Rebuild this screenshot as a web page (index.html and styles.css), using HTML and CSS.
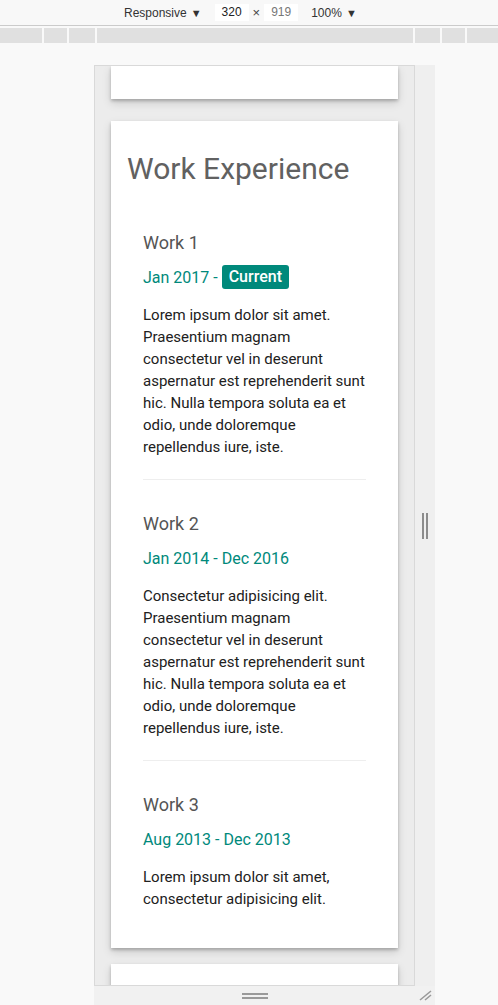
FILE: index.html
```html
<!DOCTYPE html>
<html>
<head>
<meta charset="utf-8">
<link rel="stylesheet" href="styles.css">
</head>
<body>
<div class="toolbar">
  <span class="tb-label">Responsive</span><span class="caret">▼</span>
  <span class="dim-box">320</span><span class="times">×</span><span class="dim-box dim-grey">919</span>
  <span class="tb-label zoom">100%</span><span class="caret">▼</span>
</div>
<div class="ruler">
  <div></div><div></div><div></div><div></div><div></div><div></div><div></div>
</div>
<div class="stage">
  <div class="frame">
    <div class="device">
      <div class="card card-top"></div>
      <div class="card card-main">
        <h2 class="card-title">Work Experience</h2>
        <div class="job">
          <h3 class="job-title">Work 1</h3>
          <div class="job-date">Jan 2017 -&nbsp;<span class="badge">Current</span></div>
          <p class="job-desc">Lorem ipsum dolor sit amet. Praesentium magnam consectetur vel in deserunt aspernatur est reprehenderit sunt hic. Nulla tempora soluta ea et odio, unde doloremque repellendus iure, iste.</p>
        </div>
        <div class="job">
          <h3 class="job-title">Work 2</h3>
          <div class="job-date">Jan 2014 - Dec 2016</div>
          <p class="job-desc">Consectetur adipisicing elit. Praesentium magnam consectetur vel in deserunt aspernatur est reprehenderit sunt hic. Nulla tempora soluta ea et odio, unde doloremque repellendus iure, iste.</p>
        </div>
        <div class="job job-last">
          <h3 class="job-title">Work 3</h3>
          <div class="job-date">Aug 2013 - Dec 2013</div>
          <p class="job-desc">Lorem ipsum dolor sit amet, consectetur adipisicing elit.</p>
        </div>
      </div>
      <div class="card card-bottom"></div>
    </div>
    <div class="vhandle"><span class="vgrip"></span><span class="vgrip"></span></div>
  </div>
  <div class="hstrip">
    <div class="hhandle"><span class="hgrip"></span><span class="hgrip"></span></div>
    <div class="corner">
      <svg width="20" height="19" viewBox="0 0 20 19"><path d="M15 5 L4 14 M15 9 L9 14" stroke="#9a9a9a" stroke-width="1.6" fill="none"/></svg>
    </div>
  </div>
</div>
</body>
</html>
```
FILE: styles.css
```css
html, body {
  margin: 0;
  padding: 0;
}
body {
  width: 498px;
  height: 1005px;
  overflow: hidden;
  background: #f9f9f9;
  font-family: "Liberation Sans", Arial, sans-serif;
}
.toolbar {
  border-bottom: 1px solid #cbcbcb;
  background: #f8f8f8;
  display: flex;
  align-items: center;
  padding-left: 124px;
  font-size: 12px;
  color: #333;
  box-sizing: border-box;
  height: 26px;
}
.caret {
  font-size: 11px;
  margin-left: 4px;
  color: #333;
}
.dim-box {
  background: #fff;
  width: 34px;
  height: 17px;
  line-height: 17px;
  text-align: center;
  color: #222;
  font-size: 12px;
  margin-left: 13px;
}
.dim-grey {
  color: #777;
  margin-left: 4px;
}
.times {
  margin-left: 4px;
  font-size: 13px;
  color: #444;
}
.zoom {
  margin-left: 13px;
}
.ruler {
  margin-top: 2px;
  height: 15px;
  display: grid;
  grid-template-columns: 42px 23px 26px 316px 25px 23px 1fr;
  column-gap: 2px;
}
.ruler div {
  background: #e0e0e0;
}
.stage {
  margin-top: 22px;
  margin-left: 94px;
  width: 341px;
}
.frame {
  display: flex;
}
.device {
  width: 320px;
  height: 919px;
  border: 1px solid #d9d9d9;
  background: #ececec;
  overflow: hidden;
}
.card {
  background: #fff;
  margin: 0 16px;
  box-shadow: 0 2px 3px rgba(0,0,0,0.22), 0 4px 9px rgba(0,0,0,0.14);
}
.card-top {
  height: 33px;
}
.card-main {
  margin-top: 22px;
  padding: 16px;
  font-family: Roboto, "Liberation Sans", sans-serif;
}
.card-bottom {
  margin-top: 16px;
  height: 60px;
}
.card-title {
  margin: 14px 0 13px;
  font-size: 30px;
  line-height: 36px;
  font-weight: 400;
  color: #616161;
}
.job {
  padding: 32px 0 21px;
  margin: 0 16px;
  border-bottom: 1px solid #eeeeee;
}
.job + .job {
  padding-top: 33px;
}
.job-last {
  border-bottom: none;
  padding-bottom: 22px;
}
.job-title {
  margin: 0;
  font-size: 18px;
  line-height: 22px;
  font-weight: 400;
  color: #555;
}
.job-date {
  margin-top: 11px;
  height: 24px;
  display: flex;
  align-items: center;
  font-size: 16px;
  color: #00897b;
}
.badge {
  background: #00897b;
  color: #fff;
  font-weight: 500;
  padding: 0 7px;
  height: 24px;
  line-height: 24px;
  border-radius: 3px;
}
.job-desc {
  margin: 15px 0 0;
  font-size: 15px;
  line-height: 22px;
  color: #212121;
}
.vhandle {
  width: 20px;
  height: 921px;
  background: #efefef;
  display: flex;
  justify-content: center;
  align-items: center;
  gap: 2px;
  padding-right: 1px;
  box-sizing: border-box;
}
.vgrip {
  width: 2px;
  height: 26px;
  background: #8c8c8c;
}
.hstrip {
  display: flex;
  height: 20px;
  background: #f1f1f1;
}
.hhandle {
  width: 322px;
  display: flex;
  flex-direction: column;
  align-items: center;
  padding-top: 7px;
  gap: 2px;
  box-sizing: border-box;
}
.hgrip {
  width: 26px;
  height: 2px;
  background: #9a9a9a;
}
.corner {
  width: 19px;
  height: 20px;
}
.corner svg {
  display: block;
}
```
